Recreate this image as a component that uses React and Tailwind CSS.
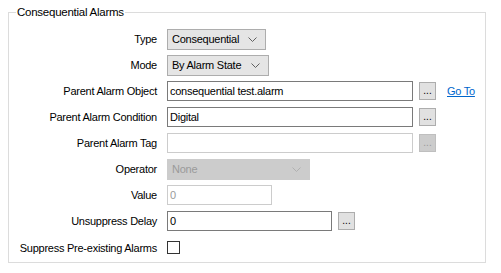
import React from 'react';

const font = { fontFamily: '"Liberation Sans", Arial, sans-serif' };

const Chevron = ({ color = '#606060' }) => (
  <svg width="9" height="5" viewBox="0 0 9 5" className="shrink-0">
    <path d="M0.5 0.5 L4.5 4.5 L8.5 0.5" fill="none" stroke={color} strokeWidth="1" />
  </svg>
);

const Combo = ({ value, width, disabled }) => (
  <div
    className={`flex h-[21px] items-center justify-between whitespace-nowrap border pl-[4px] pr-[8px] ${
      disabled ? 'border-[#cccccc] bg-[#cccccc] text-[#9a9a9a]' : 'border-[#adadad] bg-[#e5e5e5] text-black'
    } ${width}`}
  >
    <span>{value}</span>
    <Chevron color={disabled ? '#b0b0b0' : '#606060'} />
  </div>
);

const TextBox = ({ value, width, disabled }) => (
  <div
    className={`flex h-[20px] items-center whitespace-nowrap bg-white px-[2px] ${
      disabled ? 'border border-[#cccccc] text-[#9a9a9a]' : 'border border-[#7a7a7a] text-black'
    } ${width}`}
  >
    {value}
  </div>
);

const DotsButton = ({ disabled }) => (
  <div
    className={`ml-[6px] flex h-[18px] w-[17px] items-end justify-center pb-[3px] text-[10px] leading-none tracking-normal ${
      disabled ? 'border border-[#bfbfbf] bg-[#cccccc] text-[#9a9a9a]' : 'border border-[#adadad] bg-[#e1e1e1] text-black'
    }`}
  >
    ...
  </div>
);

const Row = ({ label, children }) => (
  <div className="flex h-[26px] items-center">
    <div className="w-[148px] shrink-0 whitespace-nowrap text-right">{label}</div>
    <div className="ml-[10px] flex items-center">{children}</div>
  </div>
);

export default function App() {
  return (
    <div className="h-[273px] w-[501px] bg-white text-[11px] leading-[16px] tracking-[-0.25px] text-black" style={font}>
      <fieldset className="ml-[8px] mt-[4px] h-[259px] w-[478px] border border-[#dcdcdc] pt-[6px]">
        <legend className="ml-[7px] px-[1px] text-[11.5px]">Consequential Alarms</legend>
        <Row label="Type">
          <Combo value="Consequential" width="w-[99px]" />
        </Row>
        <Row label="Mode">
          <Combo value="By Alarm State" width="w-[102px]" />
        </Row>
        <Row label="Parent Alarm Object">
          <TextBox value="consequential test.alarm" width="w-[246px]" />
          <DotsButton />
          <a className="ml-[11px] text-[#0066cc] underline">Go To</a>
        </Row>
        <Row label="Parent Alarm Condition">
          <TextBox value="Digital" width="w-[246px]" />
          <DotsButton />
        </Row>
        <Row label="Parent Alarm Tag">
          <TextBox value="" width="w-[246px]" disabled />
          <DotsButton disabled />
        </Row>
        <Row label="Operator">
          <Combo value="None" width="w-[143px]" disabled />
        </Row>
        <Row label="Value">
          <TextBox value="0" width="w-[105px]" disabled />
        </Row>
        <Row label="Unsuppress Delay">
          <TextBox value="0" width="w-[165px]" />
          <DotsButton />
        </Row>
        <div className="flex h-[26px] items-center pt-[1px]">
          <div className="w-[148px] shrink-0 whitespace-nowrap text-right">Suppress Pre-existing Alarms</div>
          <div className="ml-[10px] h-[13px] w-[13px] border border-[#333333] bg-white" />
        </div>
      </fieldset>
    </div>
  );
}
